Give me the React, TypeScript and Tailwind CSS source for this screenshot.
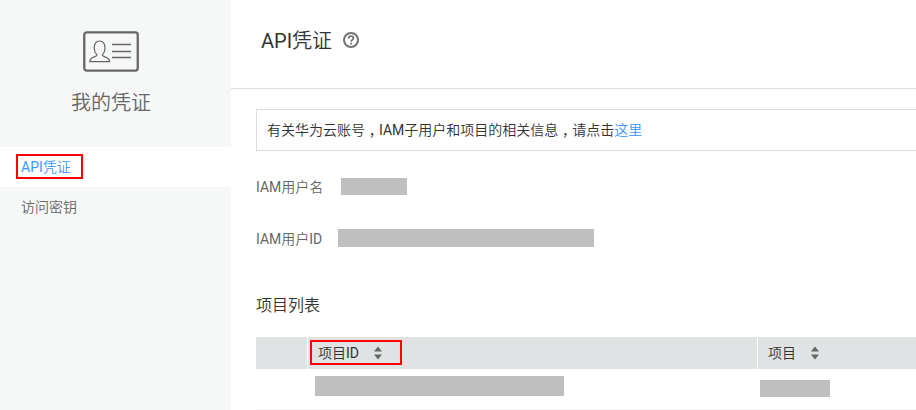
import type { ReactNode } from "react";

function IdCardIcon() {
  return (
    <svg width="56" height="41" viewBox="0 0 56 41" fill="none" stroke="#666" className="block">
      <rect x="1.25" y="1.4" width="53.5" height="38.2" rx="2.5" strokeWidth="2.3" />
      <path
        d="M13.8 23.6c-1.8-1.8-2.6-3.7-2.6-6.4 0-4.8 1.8-7.2 5.4-7.2s5.4 2.4 5.4 7.2c0 2.7-.8 4.6-2.6 6.4-.6 3 7 1.3 7.2 7H6.8c.2-5.7 7.6-4 7-7z"
        strokeWidth="1.2"
      />
      <path d="M29 13.5h19M29 20.5h19M29 26.5h19" strokeWidth="1.3" />
    </svg>
  );
}

function HelpIcon() {
  return (
    <svg width="16" height="16" viewBox="0 0 16 16" fill="none" stroke="#737373" className="block">
      <circle cx="8" cy="8" r="7" strokeWidth="2" />
      <path d="M5.7 6.4c0-1.4 1-2.3 2.4-2.3s2.3.9 2.3 2.1c0 1.6-2.3 1.7-2.3 3.5" strokeWidth="1.8" />
      <path d="M8.1 10.7v1.8" strokeWidth="1.8" />
    </svg>
  );
}

function SortIcon() {
  return (
    <svg width="8" height="14" viewBox="0 0 8 14" fill="#666" className="block">
      <path d="M4 .5L8 5.5H0zM4 13.5L8 8.5H0z" />
    </svg>
  );
}

function Comma() {
  return <span className="relative top-[5px] font-['Noto_Sans_CJK_TC',sans-serif] leading-none">，</span>;
}

function Field({ label, children }: { label: string; children: ReactNode }) {
  return (
    <div className="flex h-[18px] items-center text-sm text-[#666]">
      <span className="pt-[2px] whitespace-nowrap">{label}</span>
      {children}
    </div>
  );
}

export default function App() {
  return (
    <div className="flex h-[410px] w-[916px] overflow-hidden bg-white font-['Roboto','Noto_Sans_CJK_SC_DemiLight','Noto_Sans_CJK_SC_Light','Noto_Sans_CJK_SC',sans-serif] text-[#333]">
      <aside className="w-[231px] shrink-0 bg-[#f6f8f8]">
        <div className="flex h-[147px] flex-col items-center pt-[31px] pr-[9px]">
          <IdCardIcon />
          <h2 className="mt-4 text-xl leading-[30px] text-[#666]">我的凭证</h2>
        </div>
        <nav className="text-sm">
          <a className="flex h-10 items-start bg-white pt-[7px] pl-4 text-[#3c96fa]">
            <span className="flex h-[25px] w-[67px] items-center border-2 border-[#f00] pt-px pl-[3px]">API凭证</span>
          </a>
          <a className="flex h-10 items-center pl-[21px] text-[#666]">访问密钥</a>
        </nav>
      </aside>

      <main className="min-w-0 flex-1">
        <header className="flex h-[89px] items-start gap-[11px] border-b border-[#dcdcdc] pt-[25px] pl-[30px]">
          <h1 className="pt-px text-xl leading-[30px]">API凭证</h1>
          <div className="pt-[7px]">
            <HelpIcon />
          </div>
        </header>

        <div className="pl-[25px]">
          <div className="mt-5 flex h-[42px] items-center border border-r-0 border-[#dcdcdc] pl-[10px] text-sm">
            <p className="whitespace-nowrap">
              有关华为云账号
              <Comma />
              IAM子用户和项目的相关信息
              <Comma />
              请点击<a className="text-[#3c96fa]">这里</a>
            </p>
          </div>

          <div className="mt-[26px]">
            <Field label="IAM用户名">
              <span className="ml-[18px] h-[17px] w-[66px] bg-[#bfbfbf]" />
            </Field>
          </div>
          <div className="mt-[34px]">
            <Field label="IAM用户ID">
              <span className="ml-4 h-[18px] w-[256px] bg-[#bfbfbf]" />
            </Field>
          </div>

          <h3 className="mt-[47px] text-base leading-6">项目列表</h3>

          <div className="mt-[19px]">
            <div className="flex h-8 gap-px text-sm">
              <div className="w-[51px] bg-[#dfe3e4]" />
              <div className="flex w-[449px] items-start bg-[#dfe3e4] pt-[3px] pl-[2px]">
                <div className="flex h-[25px] w-[92px] items-center gap-[15px] border-2 border-[#f00] pl-[6px]">
                  <span>项目ID</span>
                  <SortIcon />
                </div>
              </div>
              <div className="flex flex-1 items-center gap-[15px] bg-[#dfe3e4] pl-[10px]">
                <span>项目</span>
                <SortIcon />
              </div>
            </div>
            <div className="flex h-[41px] border-b border-[#f5f5f5]">
              <div className="w-[59px]" />
              <div className="w-[445px] pt-[7px]">
                <div className="h-5 w-[249px] bg-[#bfbfbf]" />
              </div>
              <div className="pt-[11px]">
                <div className="h-[17px] w-[70px] bg-[#bfbfbf]" />
              </div>
            </div>
          </div>
        </div>
      </main>
    </div>
  );
}
